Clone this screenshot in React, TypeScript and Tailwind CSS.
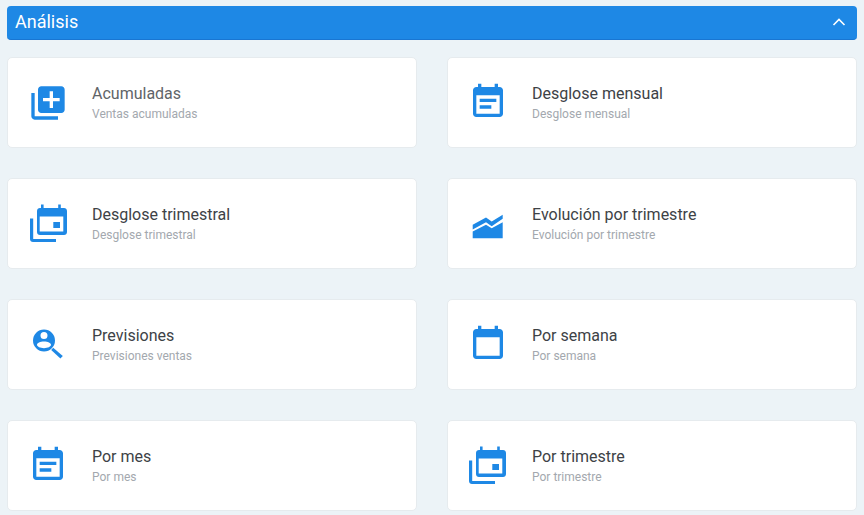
import React from "react";

const I = ({ children, vb = "0 0 24 24" }: { children: React.ReactNode; vb?: string }) => (
  <svg viewBox={vb} className="w-10 h-10 shrink-0 fill-[#1e88e5]" aria-hidden="true">
    {children}
  </svg>
);

const LibraryAdd = () => (
  <I><path d="M4 6H2v14c0 1.1.9 2 2 2h14v-2H4V6zm16-4H8c-1.1 0-2 .9-2 2v12c0 1.1.9 2 2 2h12c1.1 0 2-.9 2-2V4c0-1.1-.9-2-2-2zm-1 9h-4v4h-2v-4H9V9h4V5h2v4h4v2z" /></I>
);
const EventNote = () => (
  <I vb="0 0.6 24 24"><path d="M17 10H7v2h10v-2zm2-7h-1V1h-2v2H8V1H6v2H5c-1.11 0-1.99.9-1.99 2L3 19c0 1.1.89 2 2 2h14c1.1 0 2-.9 2-2V5c0-1.1-.9-2-2-2zm0 16H5V8h14v11zm-5-5H7v2h7v-2z" /></I>
);
const Calendar = () => (
  <I vb="0 0.6 24 24"><path d="M19 3h-1V1h-2v2H8V1H6v2H5c-1.1 0-2 .9-2 2v14c0 1.1.9 2 2 2h14c1.1 0 2-.9 2-2V5c0-1.1-.9-2-2-2zm0 16H5V8h14v11z" /></I>
);
const Stacked = ({ vb }: { vb: string }) => (
  <I vb={vb}>
    <path fillRule="evenodd" d="M13 .5h2.600v3.500h14.600V.5h2.600v3.500h3.200c1.700 0 3 1.300 3 3v21c0 1.700-1.300 3-3 3H12c-1.700 0-3-1.300-3-3V7c0-1.700 1.300-3 3-3h1V.5zM11.700 12.500V27.600h23.600V12.500H11.700z" />
    <path d="M25.300 18H32v6h-6.700z" />
    <path d="M2 14.500h3.200v20.300c0 .2.1.3.3.3H28v3H5c-1.700 0-3-1.300-3-3V14.500z" />
  </I>
);
const Chart = () => (
  <I vb="0 0 40 40">
    <path d="M4.700 20.800 18 13.500l5.700 4 11-6.700v4l-11 7.400-5.700-4-13.300 7.300z" />
    <path d="M4.700 27.500 18 20.800l5.700 3.400 11-6v16H4.700z" />
  </I>
);
const PersonSearch = () => (
  <I vb="0 0 40 40">
    <path fillRule="evenodd" d="M16 4.500a11 11 0 1 1 0 22 11 11 0 0 1 0-22zM16 7a3.500 3.500 0 1 0 0 7 3.500 3.500 0 0 0 0-7zM16 16.400c-3.900 0-7 1.600-7 3.400s3.100 3.400 7 3.400 7-1.600 7-3.400-3.100-3.400-7-3.400z" />
    <path d="M25.200 22.800 34.800 31 32.400 33.400 23.200 25z" />
  </I>
);

const items = [
  { t: "Acumuladas", s: "Ventas acumuladas", i: <LibraryAdd />, c: "text-[#5f6468]" },
  { t: "Desglose mensual", s: "Desglose mensual", i: <EventNote />, c: "text-[#3d4246]" },
  { t: "Desglose trimestral", s: "Desglose trimestral", i: <Stacked vb="0 0 40 40" />, c: "text-[#3d4246]" },
  { t: "Evolución por trimestre", s: "Evolución por trimestre", i: <Chart />, c: "text-[#3d4246]" },
  { t: "Previsiones", s: "Previsiones ventas", i: <PersonSearch />, c: "text-[#3d4246]" },
  { t: "Por semana", s: "Por semana", i: <Calendar />, c: "text-[#3d4246]" },
  { t: "Por mes", s: "Por mes", i: <EventNote />, c: "text-[#3d4246]" },
  { t: "Por trimestre", s: "Por trimestre", i: <Stacked vb="1 0 40 40" />, c: "text-[#3d4246]" },
];

export default function App() {
  return (
    <div className="h-[515px] w-[864px] overflow-hidden bg-[#ecf3f7] px-[7px] pt-[6px] font-['Roboto',sans-serif]">
      <div className="flex h-[34px] items-center justify-between rounded-[4px] border-b border-[#1976d2] bg-[#1e88e5] pb-[2px] pl-2 pr-[11px] text-white">
        <span className="text-[18px] font-normal leading-none">Análisis</span>
        <svg viewBox="0 0 14 8" className="h-2 w-[14px] fill-none stroke-white stroke-[1.6]" aria-hidden="true">
          <path d="M1.500 7 7 1.500 12.500 7" />
        </svg>
      </div>
      <div className="mt-[17px] grid grid-cols-[410px_410px] gap-x-[30px] gap-y-[30px]">
        {items.map((it) => (
          <div
            key={it.t}
            className="flex h-[91px] items-center gap-6 rounded-[5px] border border-[#e6ebee] bg-white pl-5"
          >
            {it.i}
            <div className="flex flex-col">
              <span className={`text-[16px] leading-[21px] antialiased ${it.c}`}>{it.t}</span>
              <span className="mt-[2px] mb-px text-[12px] leading-[16px] text-[#a3a8ae]">{it.s}</span>
            </div>
          </div>
        ))}
      </div>
    </div>
  );
}
